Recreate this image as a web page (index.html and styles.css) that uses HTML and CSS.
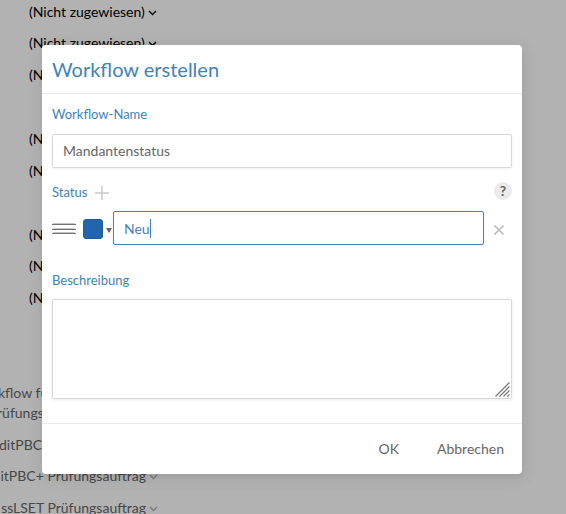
FILE: index.html
```html
<!DOCTYPE html>
<html lang="de">
<head>
<meta charset="utf-8">
<title>Workflow erstellen</title>
<link rel="stylesheet" href="styles.css">
</head>
<body>
<div class="page">
  <div class="list assigned">
    <div class="row">(Nicht zugewiesen)<svg class="chev" viewBox="0 0 9 6"><path d="M1 1l3.5 3.5L8 1"/></svg></div>
    <div class="row high">(Nicht zugewiesen)<svg class="chev" viewBox="0 0 9 6"><path d="M1 1l3.5 3.5L8 1"/></svg></div>
    <div class="row">(N</div>
    <div class="row"></div>
    <div class="row">(N</div>
    <div class="row">(N</div>
    <div class="row"></div>
    <div class="row low">(N</div>
    <div class="row">(N</div>
    <div class="row">(N</div>
  </div>
  <div class="list flows">
    <div class="double"><div>kflow fü</div><div class="second">rüfungs</div></div>
    <div class="row audit">ditPBC</div>
    <div class="row end">itPBC+ Prüfungsauftrag<svg class="chev" viewBox="0 0 9 6"><path d="M1 1l3.5 3.5L8 1"/></svg></div>
    <div class="row end">ssLSET Prüfungsauftrag<svg class="chev" viewBox="0 0 9 6"><path d="M1 1l3.5 3.5L8 1"/></svg></div>
  </div>
</div>
<div class="overlay">
  <section class="modal">
    <h1 class="title">Workflow erstellen</h1>
    <div class="content">
      <div class="label">Workflow-Name</div>
      <div class="field name">Mandantenstatus</div>
      <div class="statushead">
        <span class="label">Status</span>
        <svg class="plus" viewBox="0 0 14 14"><path d="M7 0v14M0 7h14"/></svg>
        <span class="help">?</span>
      </div>
      <div class="statusrow">
        <svg class="grip" viewBox="0 0 24 12"><path class="soft" d="M1 .5h22M1 5.5h22M1 9.5h22"/><path d="M0 1.5h24M0 6.5h24M0 10.5h24"/></svg>
        <span class="swatch"></span>
        <svg class="caret" viewBox="0 0 6 5"><path d="M0 0h6L3 5z"/></svg>
        <div class="field active">Neu<span class="cursor"></span></div>
        <svg class="remove" viewBox="0 0 10 10"><path d="M.5 .5l9 9M9.500 .5l-9 9"/></svg>
      </div>
      <div class="label">Beschreibung</div>
      <div class="area">
        <svg class="resize" viewBox="0 0 15 15"><path d="M.5 14.500l14-14M4.500 14.500l10-10M8.500 14.500l6-6M12.500 14.500l2-2"/></svg>
      </div>
    </div>
    <footer class="actions"><span>OK</span><span>Abbrechen</span></footer>
  </section>
</div>
</body>
</html>
```

FILE: styles.css
```css
* { box-sizing: border-box; }
body {
  margin: 0;
  width: 566px;
  height: 514px;
  overflow: hidden;
  position: relative;
  background: #b2b2b2;
  font-family: Lato, sans-serif;
  font-size: 14px;
  line-height: 20px;
  color: #666;
}
svg { display: block; fill: none; flex: none; }
.page { width: 158px; height: 514px; overflow: hidden; }
.row { display: flex; align-items: center; height: 31.75px; white-space: nowrap; }
.assigned { color: #000; padding: 0 0 0 29px; margin-top: -4px; }
.low { padding-top: 1px; }
.high { padding-bottom: 1px; }
.chev { width: 9px; height: 6px; margin: 2px 0 0 3px; stroke: currentColor; stroke-width: 1.5; }
.flows { margin-top: 69px; color: #474747; }
.flows .chev { stroke: #7d7d7d; }
.double { height: 46px; white-space: nowrap; margin-left: -2px; }
.second { margin-left: -1px; }
.audit { padding-top: 1px; margin-left: -1px; }
.end { justify-content: flex-end; }
.overlay { position: absolute; inset: 0; padding: 45px 44px 40px 42px; }
.modal {
  height: 429px;
  background: #fff;
  border-radius: 4px;
  box-shadow: 1px 3px 3px rgba(0,0,0,.04), 1px 3px 15px 2px rgba(0,0,0,.08);
}
.title {
  margin: 0;
  height: 49px;
  padding-left: 10px;
  border-bottom: 1px solid #eaeaea;
  font-size: 20px;
  line-height: 48px;
  font-weight: 400;
  color: #4183b8;
}
.content { height: 329px; padding: 10px 10px 0; }
.label { color: #4183b8; height: 20px; font-size: 13px; }
.field {
  height: 34px;
  border: 1px solid #d8d8d8;
  border-radius: 2px;
  padding-left: 10px;
  line-height: 32px;
  box-shadow: 0 1px 3px rgba(0,0,0,.06);
}
.name { margin-top: 10px; }
.statushead { display: flex; align-items: center; height: 20px; margin: 14px 0 9px; }
.plus { width: 14px; height: 14px; margin: 2px 0 0 8px; stroke: #c9c9c9; stroke-width: 1.5; }
.help {
  width: 18px;
  height: 18px;
  margin: -2px 0 0 auto;
  border-radius: 50%;
  background: #ebebeb;
  text-align: center;
  line-height: 18px;
  font-weight: 700;
}
.statusrow { display: flex; align-items: center; margin-bottom: 25px; }
.grip { width: 24px; height: 12px; margin-top: 2px; stroke: #737373; }
.soft { stroke: #c4c4c4; }
.swatch { width: 20px; height: 20px; margin: 2px 0 0 7px; background: #2166ac; border: 1px solid #1e5c9b; border-radius: 3px; }
.caret { width: 6px; height: 5px; margin: 4px 1px 0 3px; fill: #666; }
.active { display: flex; line-height: 34px; width: 371px; border-color: #4183b8; color: #4183b8; }
.cursor { width: 1px; height: 19px; margin-top: 7px; background: #4183b8; }
.remove { width: 10px; height: 10px; margin: 4px 0 0 10px; stroke: #bdbdbd; stroke-width: 1.6; }
.area {
  display: flex;
  align-items: flex-end;
  justify-content: flex-end;
  height: 100px;
  margin-top: 9px;
  padding: 1px;
  border: 1px solid #d8d8d8;
  border-radius: 2px;
  box-shadow: 0 1px 3px rgba(0,0,0,.08);
}
.resize { width: 15px; height: 15px; stroke: #777; stroke-width: 1.2; }
.actions {
  display: flex;
  justify-content: flex-end;
  gap: 38px;
  height: 51px;
  padding: 15px 18px 0 0;
  border-top: 1px solid #eaeaea;
}
```
